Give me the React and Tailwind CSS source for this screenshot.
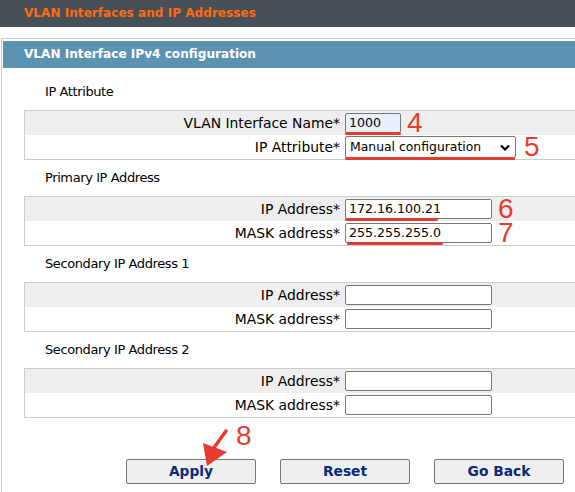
import React from "react";

const sections = [
  {
    title: "IP Attribute",
    rows: [
      { label: "VLAN Interface Name*", kind: "name", value: "1000", mark: "4", line: "w-[56px]" },
      { label: "IP Attribute*", kind: "select", value: "Manual configuration", mark: "5", line: "w-[170px]" },
    ],
  },
  {
    title: "Primary IP Address",
    rows: [
      { label: "IP Address*", kind: "text", value: "172.16.100.21", mark: "6", line: "w-[93px]" },
      { label: "MASK address*", kind: "text", value: "255.255.255.0", mark: "7", line: "w-[96px] ml-[2px]" },
    ],
  },
  {
    title: "Secondary IP Address 1",
    rows: [
      { label: "IP Address*", kind: "text", value: "" },
      { label: "MASK address*", kind: "text", value: "" },
    ],
  },
  {
    title: "Secondary IP Address 2",
    rows: [
      { label: "IP Address*", kind: "text", value: "" },
      { label: "MASK address*", kind: "text", value: "" },
    ],
  },
];

const red = "#e63c2f";

function Field({ row }) {
  let box;
  if (row.kind === "name") {
    box = (
      <div className="w-[56px] h-[20px] border border-[#767676] rounded-[2px] bg-[#e8f0fe] pl-[3px] flex items-center text-[12.6px] text-black">
        {row.value}
      </div>
    );
  } else if (row.kind === "select") {
    box = (
      <div className="w-[171px] h-[22px] border border-[#767676] rounded-[2px] bg-white pl-[4px] pr-[5px] flex items-center justify-between text-[12.4px] text-black">
        <span>{row.value}</span>
        <svg width="10" height="7" viewBox="0 0 10 7">
          <polyline points="1,1.5 5,5.5 9,1.5" fill="none" stroke="#000" strokeWidth="2.2" />
        </svg>
      </div>
    );
  } else {
    box = (
      <div className="w-[147px] h-[20px] border border-[#767676] rounded-[2px] bg-white pl-[3px] flex items-center text-[12.6px] text-black">
        {row.value}
      </div>
    );
  }
  return (
    <div className="relative">
      {box}
      {row.line && (
        <div className={"absolute left-0 bottom-[-2px] h-[3px] rounded-full bg-[#e63c2f] " + row.line} />
      )}
    </div>
  );
}

export default function App() {
  return (
    <div className="w-[575px] h-[492px] overflow-hidden bg-white font-['DejaVu_Sans',sans-serif]">
      <div className="h-[27px] bg-[#474f57] pl-[24px] flex items-center">
        <span className="text-[#ff6a13] font-bold text-[12.1px]">VLAN Interfaces and IP Addresses</span>
      </div>

      <div className="mt-[11px] ml-px w-[620px] border border-[#cccccc] pt-[2px] pl-px pb-[40px]">
        <div className="h-[27px] bg-[#5b93b0] pl-[21px] flex items-center">
          <span className="text-white font-bold text-[12.1px]">VLAN Interface IPv4 configuration</span>
        </div>

        <div className="pt-[6px]">
          {sections.map((s, i) => (
            <div key={i}>
              <div className="h-[36px] pl-[42px] flex items-center text-[13px] tracking-[-0.4px] text-black">
                {s.title}
              </div>
              <div className="ml-[21px] border border-[#cccccc]">
                {s.rows.map((r, j) => (
                  <div key={j} className={"h-[24px] flex items-center " + (j === 0 ? "bg-[#eeeeee]" : "bg-white")}>
                    <div className="w-[315px] text-right text-[13.9px] text-black">{r.label}</div>
                    <div className="pl-[5px]">
                      <Field row={r} />
                    </div>
                    {r.mark && (
                      <span
                        className={
                          "font-['Liberation_Sans',sans-serif] text-[28px] leading-[22px] text-[#e63c2f] " +
                          (r.kind === "select" ? "ml-[8px]" : "ml-[6px]")
                        }
                      >
                        {r.mark}
                      </span>
                    )}
                  </div>
                ))}
              </div>
            </div>
          ))}

          <div className="mt-[41px] pl-[123px] flex gap-[24px]">
            {["Apply", "Reset", "Go Back"].map((b) => (
              <div key={b} className="relative">
                <div className="w-[130px] h-[25px] border border-[#767676] rounded-[2px] bg-[#efefef] flex items-center justify-center text-[#0b2a78] font-bold text-[13.8px]">
                  {b}
                </div>
                {b === "Apply" && (
                  <>
                    <span className="absolute left-[110px] top-[-37px] font-['Liberation_Sans',sans-serif] text-[28px] leading-none text-[#e63c2f]">
                      8
                    </span>
                    <svg className="absolute left-[74px] top-[-30px]" width="30" height="40" viewBox="0 0 30 40">
                      <line x1="26" y1="2" x2="13" y2="20" stroke={red} strokeWidth="3.5" strokeLinecap="round" />
                      <polygon points="7,37 3,14 27,23" fill={red} />
                    </svg>
                  </>
                )}
              </div>
            ))}
          </div>
        </div>
      </div>
    </div>
  );
}
